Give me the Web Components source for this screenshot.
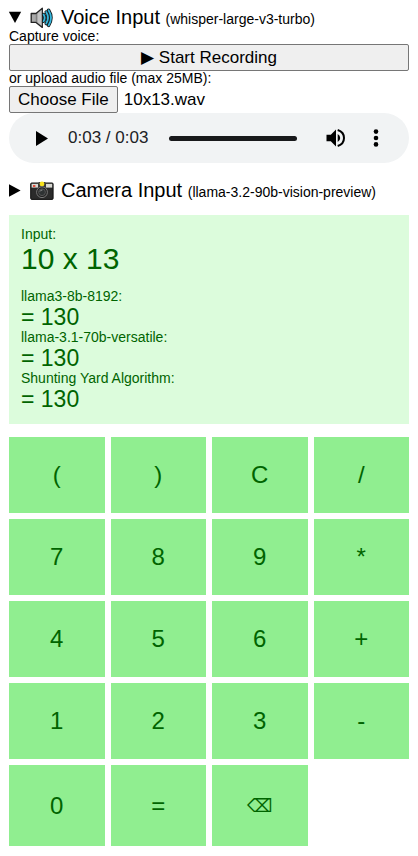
<!DOCTYPE html>
<html lang="en">
<head>
<meta charset="utf-8">
<meta name="viewport" content="width=device-width, initial-scale=1">
<title>Calculator</title>
<style>
  body { margin: 0; background: #fff; color: #000; font: 14px/15px "Liberation Sans", Arial, "DejaVu Sans", sans-serif; }
</style>
</head>
<body>
<calc-app></calc-app>
<script>
const define = (name, html, setup) => {
  const template = document.createElement('template');
  template.innerHTML = html;
  customElements.define(name, class extends HTMLElement {
    constructor() {
      super();
      this.attachShadow({ mode: 'open' }).append(template.content.cloneNode(true));
    }
    connectedCallback() {
      if (setup) setup(this, this.shadowRoot);
    }
  });
};

define('icon-speaker', `
  <style>:host { display: block; width: 24px; height: 22px; } svg { display: block; }</style>
  <svg width="24" height="22" viewBox="0 0 24 22" aria-hidden="true">
    <path d="M1.2 6.5H6L12.3 1.2V20.4L6 15.4H1.2Z" fill="#a9a9a9" stroke="#222" stroke-width="1.3" stroke-linejoin="round"/>
    <path d="M6.3 7V15" stroke="#777" stroke-width="1"/>
    <path d="M8 6.2L11.5 3V18.5L8 15.5Z" fill="#c4c4c4"/>
    <g fill="none" stroke-linecap="round">
      <g stroke="#111" stroke-width="3.4"><path d="M13.6 7.5Q15.8 10.8 13.6 14.2"/><path d="M16.2 5Q19.8 10.8 16.2 16.6"/><path d="M18.6 3.2Q23.4 10.8 18.6 18.4"/></g>
      <g stroke="#35b6dc" stroke-width="1.8"><path d="M13.6 7.5Q15.8 10.8 13.6 14.2"/><path d="M16.2 5Q19.8 10.8 16.2 16.6"/><path d="M18.6 3.2Q23.4 10.8 18.6 18.4"/></g>
    </g>
  </svg>`);

define('icon-camera', `
  <style>:host { display: block; width: 24px; height: 22px; } svg { display: block; }</style>
  <svg width="24" height="22" viewBox="0 0 24 22" aria-hidden="true">
    <rect x=".7" y="3" width="22.4" height="16.4" rx="1" fill="#2b2b2b" stroke="#111"/>
    <path d="M1.6 3.8H22.2V7.6H1.6Z" fill="#d8d8d2"/>
    <path d="M8 3.5L9 2H15L16 3.5V8H8Z" fill="#3a3a38"/>
    <rect x="3" y="5" width="2.4" height="2" fill="#e3503e"/>
    <circle cx="12" cy="4" r="2.4" fill="#f7e11d"/>
    <circle cx="12" cy="12.2" r="5.4" fill="#222" stroke="#777" stroke-width="1"/>
    <circle cx="12" cy="12.2" r="3.4" fill="#2e3233" stroke="#555" stroke-width="1"/>
    <path d="M10 11.5Q10.6 9.9 12.4 10" stroke="#999" fill="none" stroke-width=".9"/>
  </svg>`);

define('input-section', `
  <style>
    :host { display: block; }
    summary { display: flex; align-items: center; list-style: none; font-size: 20px; line-height: 23px; cursor: pointer; }
    summary::-webkit-details-marker { display: none; }
    .marker { width: 12px; height: 13px; margin-right: 9px; flex: none; }
    details[open] .marker { transform: rotate(90deg); }
    .title { margin-left: 7px; }
    small { font-size: 14px; line-height: 15px; }
  </style>
  <details>
    <summary>
      <svg class="marker" viewBox="0 0 12 13" aria-hidden="true"><path d="M0 .2L11.6 6.5L0 12.8Z"/></svg>
      <slot name="icon"></slot>
      <span class="title"><slot name="title"></slot> <small><slot name="model"></slot></small></span>
    </summary>
    <slot></slot>
  </details>`, (host, root) => {
    root.querySelector('details').open = host.hasAttribute('open');
  });

define('voice-capture', `
  <style>
    :host { display: block; }
    label, .caption { display: block; }
    button { display: block; width: 100%; }
    button, input::file-selector-button {
      box-sizing: border-box; height: 27px; padding: 0 8px; border: 1px solid #767676; border-radius: 2px;
      background: #efefef; color: #000; font: inherit;
    }
    button, input { font-size: 17px; line-height: 24px; font-family: inherit; }
    input { display: block; width: 100%; height: 27px; color: #000; }
    input::file-selector-button { margin: 0 6px 0 0; }
  </style>
  <span class="caption" id="capture">Capture voice:</span>
  <button type="button" aria-describedby="capture">▶ Start Recording</button>
  <label for="upload">or upload audio file (max 25MB):</label>
  <input id="upload" type="file" accept="audio/*">`, (host, root) => {
    const files = new DataTransfer();
    files.items.add(new File([''], '10x13.wav', { type: 'audio/wav' }));
    root.querySelector('input').files = files.files;
  });

define('audio-player', `
  <style>
    :host { display: flex; align-items: center; box-sizing: border-box; height: 50px; padding: 0 16px; border-radius: 25px; background: #f1f3f4; color: #202124; }
    button { display: grid; place-items: center; width: 34px; height: 34px; padding: 0; border: 0; background: none; flex: none; }
    time { margin-left: 9px; font-size: 17px; line-height: 20px; white-space: nowrap; }
    input { appearance: none; flex: 1; min-width: 0; height: 5px; margin: 0 22px 0 21px; border-radius: 3px; background: #18191b; }
    input::-webkit-slider-thumb { appearance: none; width: 0; height: 0; }
    .more { margin-left: 6px; }
  </style>
  <button type="button" aria-label="Play"><svg width="12" height="15" viewBox="0 0 12 15"><path d="M0 0L12 7.5L0 15Z"/></svg></button>
  <time>0:03 / 0:03</time>
  <input type="range" min="0" max="3" value="3" aria-label="Position">
  <button type="button" aria-label="Mute"><svg width="20" height="20" viewBox="0 0 20 20"><path d="M.5 6.8H4.8L10 1.6V18.4L4.8 13.2H.5ZM11.7 5.9Q14.2 7.3 14.2 10T11.7 14.1Z"/><path d="M11.7 2Q18 4 18 10T11.7 18" fill="none" stroke="#000" stroke-width="2"/></svg></button>
  <button type="button" class="more" aria-label="More options"><svg width="6" height="18" viewBox="0 0 6 18"><circle cx="3" cy="2.6" r="2.3"/><circle cx="3" cy="9" r="2.3"/><circle cx="3" cy="15.4" r="2.3"/></svg></button>`);

define('calc-result', `
  <style>
    :host { display: block; }
    .value { display: block; font-size: 23px; line-height: 26px; }
    :host([large]) .value { font-size: 30px; line-height: 34px; margin-bottom: 13px; }
    label { display: block; }
  </style>
  <label for="value"><slot name="label"></slot></label>
  <output class="value" id="value"><slot></slot></output>`);

define('calc-display', `
  <style>:host { display: block; padding: 12px; background: #dcfcdc; color: #006400; }</style>
  <slot></slot>`);

define('calc-key', `
  <style>
    :host { display: grid; }
    button { min-height: 76px; padding: 0; border: 0; border-radius: 0; background: #90ee90; color: #006400; font: inherit; font-size: 24px; line-height: 28px; }
    :host([tall]) button { min-height: 81px; }
    :host([symbol]) button { font-size: 18px; }
  </style>
  <button type="button"><slot></slot></button>`);

define('calc-keypad', `
  <style>
    :host { display: grid; grid-template-columns: repeat(4, minmax(0, 1fr)); gap: 6px; }
  </style>
  <slot></slot>`);

define('calc-app', `
  <style>
    :host { display: block; padding: 6px 9px 10px; }
    .camera { margin-top: 16px; }
    calc-display, calc-keypad { margin-top: 13px; }
  </style>
  <input-section open>
    <icon-speaker slot="icon"></icon-speaker>
    <span slot="title">Voice Input</span>
    <span slot="model">(whisper-large-v3-turbo)</span>
    <voice-capture></voice-capture>
    <audio-player></audio-player>
  </input-section>
  <input-section class="camera">
    <icon-camera slot="icon"></icon-camera>
    <span slot="title">Camera Input</span>
    <span slot="model">(llama-3.2-90b-vision-preview)</span>
  </input-section>
  <calc-display>
    <calc-result large><span slot="label">Input:</span>10 x 13</calc-result>
    <calc-result><span slot="label">llama3-8b-8192:</span>= 130</calc-result>
    <calc-result><span slot="label">llama-3.1-70b-versatile:</span>= 130</calc-result>
    <calc-result><span slot="label">Shunting Yard Algorithm:</span>= 130</calc-result>
  </calc-display>
  <calc-keypad>
    <calc-key>(</calc-key><calc-key>)</calc-key><calc-key>C</calc-key><calc-key>/</calc-key>
    <calc-key>7</calc-key><calc-key>8</calc-key><calc-key>9</calc-key><calc-key>*</calc-key>
    <calc-key>4</calc-key><calc-key>5</calc-key><calc-key>6</calc-key><calc-key>+</calc-key>
    <calc-key>1</calc-key><calc-key>2</calc-key><calc-key>3</calc-key><calc-key>-</calc-key>
    <calc-key tall>0</calc-key><calc-key tall>=</calc-key><calc-key tall symbol>⌫</calc-key>
  </calc-keypad>`);
</script>
</body>
</html>
